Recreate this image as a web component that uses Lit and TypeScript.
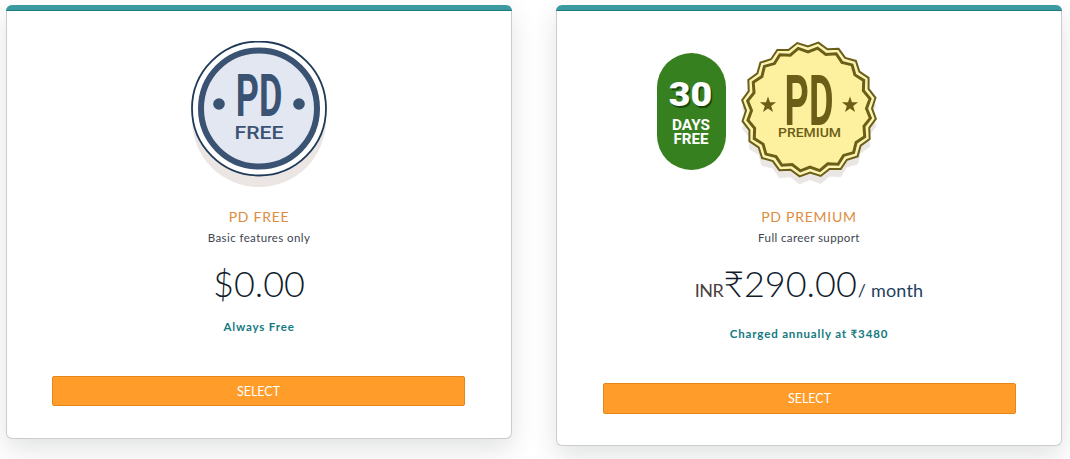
import { LitElement, html, css } from "lit";
import { customElement } from "lit/decorators.js";

function rosette(cx: number, cy: number, rOut: number, rIn: number, n: number) {
  const pts: string[] = [];
  const rot = (8 * Math.PI) / 180;
  for (let i = 0; i < n * 2; i++) {
    const r = i % 2 === 0 ? rOut : rIn;
    const a = (Math.PI * i) / n - Math.PI / 2 + rot;
    pts.push(`${(cx + r * Math.cos(a)).toFixed(2)},${(cy + r * Math.sin(a)).toFixed(2)}`);
  }
  return pts.join(" ");
}

function star(cx: number, cy: number, r: number) {
  const pts: string[] = [];
  for (let i = 0; i < 10; i++) {
    const rr = i % 2 === 0 ? r : r * 0.4;
    const a = (Math.PI * i) / 5 - Math.PI / 2;
    pts.push(`${(cx + rr * Math.cos(a)).toFixed(2)},${(cy + rr * Math.sin(a)).toFixed(2)}`);
  }
  return pts.join(" ");
}

const N = 20;
const NAVY = "#3a5372";
const OLIVE = "#6b5f17";

const freeBadge = html`<svg width="140" height="150" viewBox="0 0 140 150">
  <circle cx="70" cy="79" r="67" fill="#ebe5e3"></circle>
  <circle cx="70" cy="67.500" r="67" fill="#fff" stroke="#1f3a58" stroke-width="1.800"></circle>
  <circle cx="70" cy="67.500" r="58" fill="#e3e7f2" stroke="${NAVY}" stroke-width="6"></circle>
  <circle cx="30" cy="63" r="5.800" fill="${NAVY}"></circle>
  <circle cx="110" cy="63" r="5.800" fill="${NAVY}"></circle>
  <text transform="translate(70 75) scale(0.6 1)" text-anchor="middle" class="pd" font-size="60" fill="${NAVY}">PD</text>
  <text x="70" y="98" text-anchor="middle" class="sub" font-size="18" fill="${NAVY}" textLength="49" lengthAdjust="spacingAndGlyphs">FREE</text>
</svg>`;

const premiumBadge = html`<svg width="306" height="150" viewBox="0 0 306 150">
  <rect x="1" y="12" width="69" height="117" rx="34.500" fill="#37801f"></rect>
  <text transform="translate(36 66.500) scale(1.1 1)" text-anchor="middle" class="blk" font-size="34" fill="#17480c">30</text>
  <text transform="translate(34.500 65) scale(1.1 1)" text-anchor="middle" class="blk" font-size="34" fill="#fff">30</text>
  <text x="35" y="89" text-anchor="middle" class="pd" font-size="15" fill="#fff" textLength="38" lengthAdjust="spacingAndGlyphs">DAYS</text>
  <text x="35" y="103" text-anchor="middle" class="pd" font-size="15" fill="#fff" textLength="35" lengthAdjust="spacingAndGlyphs">FREE</text>
  <polygon points="${rosette(153, 76, 68, 63, N)}" fill="#e9e6e4"></polygon>
  <polygon points="${rosette(153, 68.500, 67.500, 63, N)}" fill="#fdf4b4" stroke="${OLIVE}" stroke-width="2"></polygon>
  <polygon points="${rosette(153, 68.500, 62, 57.500, N)}" fill="#fdf09f" stroke="${OLIVE}" stroke-width="3"></polygon>
  <polygon points="${star(112, 64, 8.500)}" fill="${OLIVE}"></polygon>
  <polygon points="${star(194, 64, 8.500)}" fill="${OLIVE}"></polygon>
  <text transform="translate(153 84) scale(0.54 1)" text-anchor="middle" class="pd" font-size="70" fill="${OLIVE}">PD</text>
  <text x="153.500" y="95.500" text-anchor="middle" class="sub" font-size="13.500" fill="${OLIVE}" textLength="63" lengthAdjust="spacingAndGlyphs">PREMIUM</text>
</svg>`;

@customElement("app-root")
export class AppRoot extends LitElement {
  static styles = css`
    :host {
      display: block;
      width: 1070px;
      height: 459px;
      overflow: hidden;
      background: #fff;
      font-family: "Lato", "Liberation Sans", sans-serif;
    }
    .row {
      display: flex;
      align-items: flex-start;
      gap: 44px;
      padding: 5px 0 0 6px;
    }
    .card {
      width: 506px;
      box-sizing: border-box;
      background: #fff;
      border: 1px solid #c9cdcd;
      border-top: 0;
      border-radius: 6px;
      box-shadow: 0 10px 26px rgba(40, 50, 50, 0.14);
      display: flex;
      flex-direction: column;
      align-items: center;
    }
    .bar {
      align-self: stretch;
      margin: 0 -1px;
      height: 6px;
      background: #3b9a9f;
      border-bottom: 1px solid #1c7a80;
      border-radius: 6px 6px 0 0;
      box-sizing: border-box;
    }
    .logo {
      height: 150px;
      margin-top: 30px;
      display: flex;
      justify-content: center;
    }
    .logo svg { display: block; }
    .pd { font-family: "Roboto", sans-serif; font-weight: 700; }
    .blk { font-family: "Roboto", sans-serif; font-weight: 900; }
    .sub { font-family: "Roboto", sans-serif; font-weight: 500; }
    .name {
      margin-top: 17px;
      font-size: 14px;
      line-height: 18px;
      letter-spacing: 0.75px;
      color: #dd8c40;
    }
    .desc {
      margin-top: 4px;
      font-size: 11.500px;
      line-height: 16px;
      letter-spacing: 0.4px;
      color: #3c4450;
    }
    .price {
      margin-top: 13px;
      height: 48px;
      display: flex;
      align-items: baseline;
      color: #101c2c;
      font-weight: 300;
      font-size: 36px;
      line-height: 48px;
    }
    .inr { font-size: 18px; font-weight: 400; letter-spacing: -0.5px; color: #4a4040; }
    .per { font-size: 18px; font-weight: 400; letter-spacing: 0.2px; color: #1f3f60; margin-left: 1px; }
    .note {
      margin-top: 12px;
      font-size: 11.500px;
      line-height: 16px;
      font-weight: 700;
      letter-spacing: 0.85px;
      color: #137a80;
    }
    .note.tall { margin-top: 19px; }
    .btn {
      margin-top: 41px;
      width: 413px;
      box-sizing: border-box;
      background: #ff9c2a;
      border: 1px solid #e4861a;
      border-radius: 2px;
      color: #fff;
      font: inherit;
      font-size: 12.500px;
      padding: 0;
    }
    .btn.left { margin-right: 1px; height: 30px; margin-bottom: 32px; }
    .btn.right { margin-left: 1px; height: 31px; margin-bottom: 31px; }
  `;

  render() {
    return html`<div class="row">
      <section class="card">
        <div class="bar"></div>
        <div class="logo">${freeBadge}</div>
        <div class="name">PD FREE</div>
        <div class="desc">Basic features only</div>
        <div class="price">$0.00</div>
        <div class="note">Always Free</div>
        <button class="btn left">SELECT</button>
      </section>
      <section class="card">
        <div class="bar"></div>
        <div class="logo">${premiumBadge}</div>
        <div class="name">PD PREMIUM</div>
        <div class="desc">Full career support</div>
        <div class="price"><span class="inr">INR</span>₹290.00<span class="per">/ month</span></div>
        <div class="note tall">Charged annually at ₹3480</div>
        <button class="btn right">SELECT</button>
      </section>
    </div>`;
  }
}
